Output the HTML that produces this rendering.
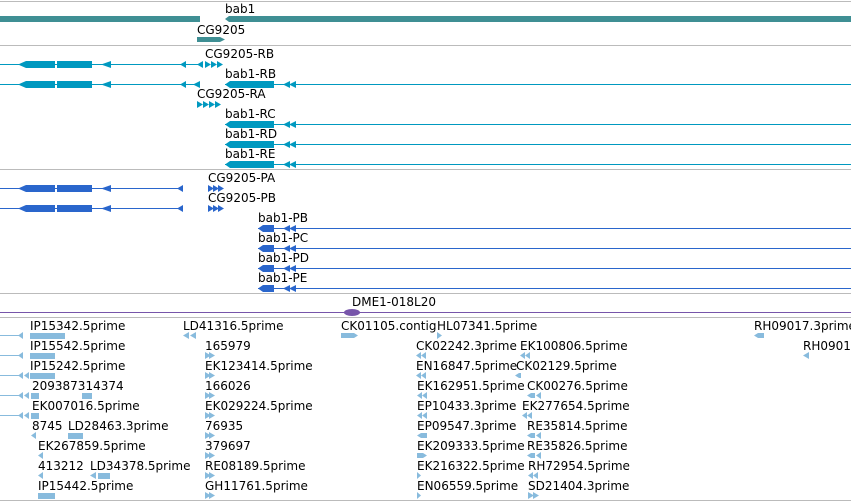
<!DOCTYPE html>
<html><head><meta charset="utf-8"><style>
html,body{margin:0;padding:0;background:#fff;width:851px;height:501px;overflow:hidden}
svg{display:block}
text{font-family:"DejaVu Sans","Liberation Sans",sans-serif;font-size:12px;fill:#000}
</style></head><body>
<svg width="851" height="501" viewBox="0 0 851 501" xmlns="http://www.w3.org/2000/svg">
<g stroke="#bbb" stroke-width="1">
<line x1="0" y1="1.5" x2="851" y2="1.5"/>
<line x1="0" y1="45.5" x2="851" y2="45.5"/>
<line x1="0" y1="169.5" x2="851" y2="169.5"/>
<line x1="0" y1="293.5" x2="851" y2="293.5"/>
<line x1="0" y1="317.5" x2="851" y2="317.5"/>
<line x1="0" y1="500.5" x2="851" y2="500.5"/>
</g>
<g fill="#3f8f94">
<rect x="0" y="16" width="200" height="6"/>
<polygon points="225,19 229,16 851,16 851,22 229,22"/>
<polygon points="197,37 220,37 225,39.5 220,42 197,42"/>
</g>
<text x="225" y="13">bab1</text>
<text x="197" y="34">CG9205</text>
<g fill="#0099c0" stroke="#0099c0">
<line x1="0" y1="64.5" x2="203" y2="64.5"/>
<line x1="0" y1="84.5" x2="200" y2="84.5"/>
<line x1="225" y1="84.5" x2="851" y2="84.5"/>
<line x1="225" y1="124.5" x2="851" y2="124.5"/>
<line x1="225" y1="144.5" x2="851" y2="144.5"/>
<line x1="225" y1="164.5" x2="851" y2="164.5"/>
</g>
<g fill="#0099c0">
<polygon points="18,64.5 26,61 55,61 55,68 26,68"/><rect x="57" y="61" width="35" height="7"/><polygon points="101,64.5 111,61 111,68"/><polygon points="180,64.5 186,61 186,68"/><polygon points="197,64.5 203,61 203,68"/>
<polygon points="205,61 211,64.5 205,68"/><polygon points="211,61 217,64.5 211,68"/><polygon points="217,61 223,64.5 217,68"/>
<polygon points="18,84.5 26,81 55,81 55,88 26,88"/><rect x="57" y="81" width="35" height="7"/><polygon points="101,84.5 111,81 111,88"/><polygon points="180,84.5 186,81 186,88"/><polygon points="193,84.5 200,81 200,88"/>
<polygon points="197,101 203,104.5 197,108"/><polygon points="203,101 209,104.5 203,108"/><polygon points="209,101 215,104.5 209,108"/><polygon points="215,101 221,104.5 215,108"/>
<polygon points="225,84.5 230,81 274,81 274,88 230,88"/><polygon points="283,84.5 290,81 290,88"/><polygon points="289,84.5 296,81 296,88"/>
<polygon points="225,124.5 230,121 274,121 274,128 230,128"/><polygon points="283,124.5 290,121 290,128"/><polygon points="289,124.5 296,121 296,128"/>
<polygon points="225,144.5 230,141 274,141 274,148 230,148"/><polygon points="283,144.5 290,141 290,148"/><polygon points="289,144.5 296,141 296,148"/>
<polygon points="225,164.5 230,161 274,161 274,168 230,168"/><polygon points="283,164.5 290,161 290,168"/><polygon points="289,164.5 296,161 296,168"/>
</g>
<text x="205" y="58">CG9205-RB</text>
<text x="225" y="78">bab1-RB</text>
<text x="197" y="98">CG9205-RA</text>
<text x="225" y="118">bab1-RC</text>
<text x="225" y="138">bab1-RD</text>
<text x="225" y="158">bab1-RE</text>
<g stroke="#2a66cc">
<line x1="0" y1="188.5" x2="183" y2="188.5"/>
<line x1="0" y1="208.5" x2="183" y2="208.5"/>
<line x1="258" y1="228.5" x2="851" y2="228.5"/>
<line x1="258" y1="248.5" x2="851" y2="248.5"/>
<line x1="258" y1="268.5" x2="851" y2="268.5"/>
<line x1="258" y1="288.5" x2="851" y2="288.5"/>
</g>
<g fill="#2a66cc">
<polygon points="18,188.5 26,185 55,185 55,192 26,192"/><rect x="57" y="185" width="35" height="7"/><polygon points="101,188.5 111,185 111,192"/><polygon points="177,188.5 183,185 183,192"/>
<polygon points="208,185 214,188.5 208,192"/><polygon points="213,185 219,188.5 213,192"/><polygon points="218,185 224,188.5 218,192"/>
<polygon points="18,208.5 26,205 55,205 55,212 26,212"/><rect x="57" y="205" width="35" height="7"/><polygon points="101,208.5 111,205 111,212"/><polygon points="177,208.5 183,205 183,212"/>
<polygon points="208,205 214,208.5 208,212"/><polygon points="213,205 219,208.5 213,212"/><polygon points="218,205 224,208.5 218,212"/>
<polygon points="258,228.5 263,225 274,225 274,232 263,232"/><polygon points="283,228.5 290,225 290,232"/><polygon points="289,228.5 296,225 296,232"/>
<polygon points="258,248.5 263,245 274,245 274,252 263,252"/><polygon points="283,248.5 290,245 290,252"/><polygon points="289,248.5 296,245 296,252"/>
<polygon points="258,268.5 263,265 274,265 274,272 263,272"/><polygon points="283,268.5 290,265 290,272"/><polygon points="289,268.5 296,265 296,272"/>
<polygon points="258,288.5 263,285 274,285 274,292 263,292"/><polygon points="283,288.5 290,285 290,292"/><polygon points="289,288.5 296,285 296,292"/>
</g>
<text x="208" y="182">CG9205-PA</text>
<text x="208" y="202">CG9205-PB</text>
<text x="258" y="222">bab1-PB</text>
<text x="258" y="242">bab1-PC</text>
<text x="258" y="262">bab1-PD</text>
<text x="258" y="282">bab1-PE</text>
<line x1="0" y1="312.5" x2="851" y2="312.5" stroke="#7755aa"/>
<ellipse cx="352" cy="312.5" rx="8" ry="3.5" fill="#7755aa"/>
<text x="352" y="306">DME1-018L20</text>
<g fill="#88bbdd" stroke="#88bbdd">
<line x1="0" y1="335.5" x2="22" y2="335.5"/>
<line x1="0" y1="355.5" x2="22" y2="355.5"/>
<line x1="0" y1="375.5" x2="22" y2="375.5"/>
<line x1="0" y1="395.5" x2="22" y2="395.5"/>
<line x1="0" y1="415.5" x2="22" y2="415.5"/>
</g>
<g fill="#88bbdd">
<polygon points="18,335.5 23,332 23,339"/><rect x="30" y="333" width="35" height="6"/>
<polygon points="18,355.5 23,352 23,359"/><rect x="30" y="353" width="25" height="6"/>
<polygon points="18,375.5 23,372 23,379"/><polygon points="24,375.5 29,372 29,379"/><rect x="30" y="373" width="25" height="6"/>
<polygon points="18,395.5 23,392 23,399"/><polygon points="24,395.5 29,392 29,399"/><rect x="31" y="393" width="8" height="6"/><rect x="82" y="393" width="10" height="6"/>
<polygon points="18,415.5 23,412 23,419"/><polygon points="24,415.5 29,412 29,419"/><rect x="31" y="413" width="8" height="6"/>
<polygon points="31,435.5 36,432 36,439"/><rect x="68" y="433" width="15" height="6"/>
<polygon points="38,455.5 43,452 43,459"/>
<polygon points="38,475.5 43,472 43,479"/><polygon points="90,475.5 96,472 96,479"/><rect x="98" y="473" width="12" height="6"/>
<rect x="38" y="493" width="17" height="6"/>
<polygon points="183,335.5 189,332 189,339"/><polygon points="190,335.5 196,332 196,339"/>
<polygon points="205,352 211,355.5 205,359"/><polygon points="209,352 215,355.5 209,359"/>
<polygon points="205,372 211,375.5 205,379"/><polygon points="209,372 215,375.5 209,379"/>
<polygon points="205,392 211,395.5 205,399"/><polygon points="209,392 215,395.5 209,399"/>
<polygon points="205,412 211,415.5 205,419"/><polygon points="209,412 215,415.5 209,419"/>
<polygon points="205,432 211,435.5 205,439"/><polygon points="209,432 215,435.5 209,439"/>
<polygon points="205,452 211,455.5 205,459"/><polygon points="209,452 215,455.5 209,459"/>
<polygon points="205,472 211,475.5 205,479"/><polygon points="209,472 215,475.5 209,479"/>
<polygon points="205,492 211,495.5 205,499"/><polygon points="209,492 215,495.5 209,499"/>
<polygon points="341,333 354,333 358,335.5 354,338 341,338"/>
<polygon points="437,332 442,335.5 437,339"/>
<polygon points="416,355.5 421,352 421,359"/><polygon points="421,355.5 426,352 426,359"/>
<polygon points="416,375.5 421,372 421,379"/><polygon points="421,375.5 426,372 426,379"/>
<polygon points="417,395.5 422,392 422,399"/><polygon points="422,395.5 427,392 427,399"/>
<polygon points="417,415.5 422,412 422,419"/><polygon points="422,415.5 427,412 427,419"/>
<polygon points="417,435.5 421,433 427,433 427,438 421,438"/>
<polygon points="417,453 423,453 427,455.5 423,458 417,458"/>
<polygon points="417,472 421,475.5 417,479"/>
<polygon points="417,492 421,495.5 417,499"/>
<polygon points="520,355.5 525,352 525,359"/><polygon points="525,355.5 530,352 530,359"/>
<polygon points="515,375.5 519,373 521,373 521,378 519,378"/>
<polygon points="527,395.5 531,393 535,393 535,398 531,398"/><polygon points="536,395.5 541,392 541,399"/>
<polygon points="522,415.5 527,412 527,419"/><polygon points="527,415.5 532,412 532,419"/>
<polygon points="527,435.5 531,433 535,433 535,438 531,438"/><polygon points="536,435.5 541,432 541,439"/>
<polygon points="527,455.5 531,453 535,453 535,458 531,458"/><polygon points="536,455.5 541,452 541,459"/>
<polygon points="528,475.5 533,472 533,479"/><polygon points="533,475.5 538,472 538,479"/>
<polygon points="528,492 534,495.5 528,499"/><polygon points="533,492 539,495.5 533,499"/>
<polygon points="754,335.5 758,333 764,333 764,338 758,338"/>
<polygon points="803,355.5 809,352 809,359"/>
</g>
<text x="30" y="330">IP15342.5prime</text>
<text x="30" y="350">IP15542.5prime</text>
<text x="30" y="370">IP15242.5prime</text>
<text x="32" y="390">209387314374</text>
<text x="32" y="410">EK007016.5prime</text>
<text x="32" y="430">8745</text><text x="68" y="430">LD28463.3prime</text>
<text x="38" y="450">EK267859.5prime</text>
<text x="38" y="470">413212</text><text x="90" y="470">LD34378.5prime</text>
<text x="38" y="490">IP15442.5prime</text>
<text x="183" y="330">LD41316.5prime</text>
<text x="205" y="350">165979</text>
<text x="205" y="370">EK123414.5prime</text>
<text x="205" y="390">166026</text>
<text x="205" y="410">EK029224.5prime</text>
<text x="205" y="430">76935</text>
<text x="205" y="450">379697</text>
<text x="205" y="470">RE08189.5prime</text>
<text x="205" y="490">GH11761.5prime</text>
<text x="341" y="330">CK01105.contig</text><text x="437" y="330">HL07341.5prime</text>
<text x="416" y="350">CK02242.3prime</text><text x="520" y="350">EK100806.5prime</text>
<text x="416" y="370">EN16847.5prime</text><text x="516" y="370">CK02129.5prime</text>
<text x="417" y="390">EK162951.5prime</text><text x="527" y="390">CK00276.5prime</text>
<text x="417" y="410">EP10433.3prime</text><text x="522" y="410">EK277654.5prime</text>
<text x="417" y="430">EP09547.3prime</text><text x="527" y="430">RE35814.5prime</text>
<text x="417" y="450">EK209333.5prime</text><text x="527" y="450">RE35826.5prime</text>
<text x="417" y="470">EK216322.5prime</text><text x="528" y="470">RH72954.5prime</text>
<text x="417" y="490">EN06559.5prime</text><text x="528" y="490">SD21404.3prime</text>
<text x="754" y="330">RH09017.3prime</text>
<text x="803" y="350">RH09017.5prime</text>
</svg>
</body></html>
